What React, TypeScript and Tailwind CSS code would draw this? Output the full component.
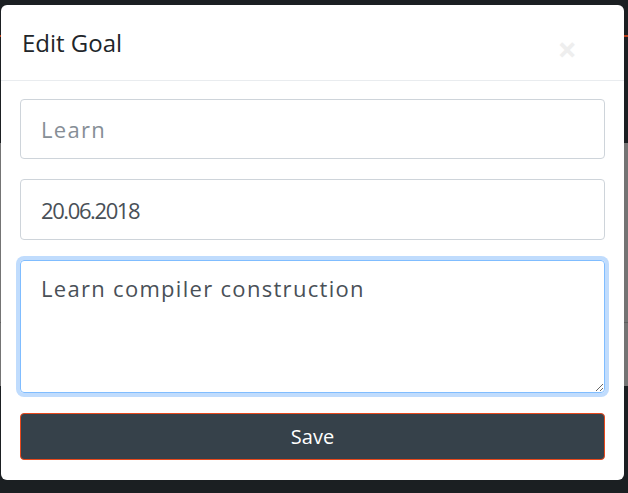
import { useState } from "react";

const font = { fontFamily: '"Open Sans", "Liberation Sans", sans-serif' };

export default function App() {
  const [title, setTitle] = useState("");
  const [date, setDate] = useState("20.06.2018");
  const [text, setText] = useState("Learn compiler construction");

  return (
    <div className="relative w-[628px] h-[493px] overflow-hidden bg-[#1b1f22]" style={font}>
      {/* page under the backdrop */}
      <div className="h-[35px]" />
      <div className="h-[2px] bg-[#b8401c]" />
      <div className="h-[106px]" />
      <div className="h-[180px] bg-[#747474] border-b border-[#5e5e5e]" />
      <div className="h-[63px] bg-[#747474]" />

      {/* modal */}
      <div className="absolute left-[1px] top-[5px] w-[623px] h-[475px] bg-white rounded-[6px] flex flex-col">
        <div className="flex h-[76px] border-b border-[#e9ecef] pl-[21px] pr-[47px]">
          <h5 className="mt-[21px] text-[24px] leading-[33px] text-[#212529]">Edit Goal</h5>
          <button className="ml-auto mt-[27px] self-start text-[34px] leading-[34px] font-bold text-[#eeeeee]">×</button>
        </div>
        <div className="flex flex-col gap-5 px-[19px] pt-[18px]">
          <input
            value={title}
            onChange={(e) => setTitle(e.target.value)}
            placeholder="Learn"
            className="h-[60px] w-full rounded border border-[#ced4da] px-5 text-[22px] tracking-[1.3px] text-[#495057] placeholder:text-[#868e96] outline-none"
          />
          <input
            value={date}
            onChange={(e) => setDate(e.target.value)}
            className="h-[61px] w-full rounded border border-[#ced4da] px-5 text-[22px] tracking-[-1.4px] text-[#495057] outline-none"
          />
          <textarea
            value={text}
            onChange={(e) => setText(e.target.value)}
            className="h-[133px] w-full rounded border border-[#80bdff] px-5 pt-[11px] text-[22px] leading-[33px] tracking-[1.3px] text-[#495057] outline-none ring-4 ring-[#c0dcfd]"
          />
          <button className="h-[47px] w-full rounded border border-[#e8491d] bg-[#36414a] text-[20px] text-white">
            Save
          </button>
        </div>
      </div>
    </div>
  );
}
